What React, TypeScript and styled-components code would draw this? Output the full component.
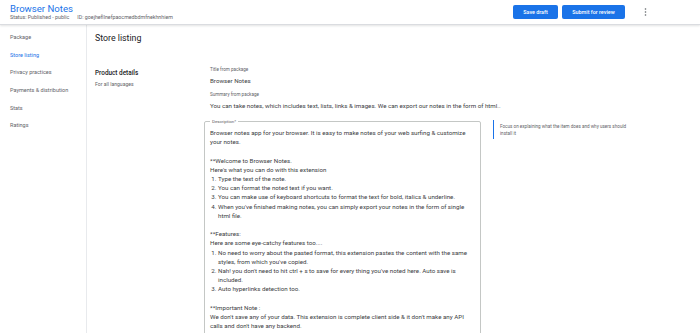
import React from "react";
import styled, { createGlobalStyle } from "styled-components";

const Global = createGlobalStyle`
  html, body {
    margin: 0;
    padding: 0;
    overflow: hidden;
    background: #fff;
    font-family: Roboto, "Liberation Sans", Arial, sans-serif;
    color: #202124;
  }
`;

const Page = styled.div`
  height: 100vh;
  display: flex;
  flex-direction: column;
`;

const Header = styled.header`
  height: 25px;
  flex-shrink: 0;
  display: flex;
  align-items: center;
  justify-content: space-between;
  padding: 0 10px;
  border-bottom: 1px solid #dadce0;
  box-shadow: 0 1px 2px rgba(60, 64, 67, 0.15);
  box-sizing: border-box;
  position: relative;
  z-index: 1;
`;

const TitleBlock = styled.div`
  display: flex;
  flex-direction: column;
`;

const AppTitle = styled.div`
  font-size: 9.6px;
  line-height: 11px;
  color: #1a73e8;
`;

const Meta = styled.div`
  display: flex;
  gap: 8px;
  font-size: 5.3px;
  line-height: 7px;
  color: #5f6368;
`;

const Actions = styled.div`
  display: flex;
  align-items: center;
  gap: 4px;
`;

const Button = styled.button<{ $w: number }>`
  height: 14px;
  width: ${(p) => p.$w}px;
  padding: 0;
  border: none;
  border-radius: 2px;
  background: #1a73e8;
  color: #fff;
  font-family: Roboto, "Liberation Sans", Arial, sans-serif;
  font-size: 5.4px;
  font-weight: 500;
  cursor: pointer;
`;

const More = styled.div`
  width: 6px;
  display: flex;
  justify-content: center;
  margin-left: 13px;
  margin-right: 42px;
`;

const Body = styled.div`
  flex: 1;
  display: flex;
  min-height: 0;
`;

const Sidebar = styled.nav`
  width: 87px;
  flex-shrink: 0;
  border-right: 1px solid #e8eaed;
  padding-top: 3px;
  box-sizing: border-box;
`;

const NavItem = styled.div<{ $active?: boolean }>`
  height: 17.7px;
  display: flex;
  align-items: center;
  padding-left: 10px;
  font-size: 5.5px;
  color: ${(p) => (p.$active ? "#1a73e8" : "#5f6368")};
`;

const Main = styled.main`
  flex: 1;
  padding-left: 8px;
`;

const Heading = styled.h1`
  margin: 7px 0 0;
  font-size: 8.8px;
  line-height: 12px;
  font-weight: 400;
  color: #202124;
`;

const Section = styled.div`
  display: grid;
  grid-template-columns: 97px 277px 1fr;
  grid-template-rows: auto auto;
  column-gap: 12px;
  margin-top: 23px;
`;

const SectionInfo = styled.div`
  grid-column: 1;
  grid-row: 1 / span 2;
  padding-top: 2px;
`;

const SectionTitle = styled.div`
  font-size: 6.4px;
  line-height: 9px;
  font-weight: 500;
  color: #202124;
`;

const SectionSub = styled.div`
  margin-top: 3px;
  font-size: 5.1px;
  line-height: 7px;
  color: #5f6368;
`;

const Fields = styled.div`
  grid-column: 2;
  grid-row: 1;
  display: flex;
  flex-direction: column;
  gap: 6px;
  padding-bottom: 8px;
`;

const StaticField = styled.div`
  padding-left: 6px;
`;

const FieldLabel = styled.div`
  font-size: 4.6px;
  line-height: 6px;
  color: #5f6368;
`;

const FieldValue = styled.div`
  margin-top: 3px;
  font-size: 6.2px;
  line-height: 10px;
  color: #3c4043;
  white-space: nowrap;
`;

const Box = styled.fieldset`
  grid-column: 2;
  grid-row: 2;
  margin: 0;
  padding: 5px 8px 12px 5px;
  border: 1px solid #c4c7c5;
  border-radius: 2px;
  min-width: 0;
`;

const Legend = styled.legend`
  margin-left: 0;
  padding: 0 2px;
  font-size: 4.4px;
  line-height: 5px;
  color: #5f6368;
`;

const Text = styled.div`
  font-size: 6.2px;
  line-height: 9.2px;
  color: #3c4043;
`;

const Line = styled.div`
  min-height: 9.2px;
`;

const List = styled.ol`
  margin: 0;
  padding-left: 8px;
`;

const Help = styled.div`
  grid-column: 3;
  grid-row: 2;
  align-self: start;
  width: 140px;
  height: 19px;
  margin-top: 1px;
  border-left: 1px solid #1a73e8;
  padding: 3px 0 0 6px;
  box-sizing: border-box;
  font-size: 4.6px;
  line-height: 7px;
  color: #5f6368;
`;

const navItems = [
  "Package",
  "Store listing",
  "Privacy practices",
  "Payments & distribution",
  "Stats",
  "Ratings",
];

const App: React.FC = () => {
  return (
    <Page>
      <Global />
      <Header>
        <TitleBlock>
          <AppTitle>Browser Notes</AppTitle>
          <Meta>
            <span>Status: Published - public</span>
            <span>ID: goejhefllnefpaocmedbdmfnekhnhiem</span>
          </Meta>
        </TitleBlock>
        <Actions>
          <Button $w={45}>Save draft</Button>
          <Button $w={63}>Submit for review</Button>
          <More>
            <svg width="3" height="8" viewBox="0 0 3 8">
              <circle cx="1.5" cy="1" r="0.8" fill="#5f6368" />
              <circle cx="1.5" cy="4" r="0.8" fill="#5f6368" />
              <circle cx="1.5" cy="7" r="0.8" fill="#5f6368" />
            </svg>
          </More>
        </Actions>
      </Header>
      <Body>
        <Sidebar>
          {navItems.map((item) => (
            <NavItem key={item} $active={item === "Store listing"}>
              {item}
            </NavItem>
          ))}
        </Sidebar>
        <Main>
          <Heading>Store listing</Heading>
          <Section>
            <SectionInfo>
              <SectionTitle>Product details</SectionTitle>
              <SectionSub>For all languages</SectionSub>
            </SectionInfo>
            <Fields>
              <StaticField>
                <FieldLabel>Title from package</FieldLabel>
                <FieldValue>Browser Notes</FieldValue>
              </StaticField>
              <StaticField>
                <FieldLabel>Summary from package</FieldLabel>
                <FieldValue>
                  You can take notes, which includes text, lists, links &amp; images. We can export our notes in the form of html..
                </FieldValue>
              </StaticField>
            </Fields>
            <Box>
              <Legend>Description*</Legend>
              <Text>
                <Line>
                  Browser notes app for your browser. It is easy to make notes of your web surfing &amp; customize
                  your notes.
                </Line>
                <Line />
                <Line>**Welcome to Browser Notes.</Line>
                <Line>Here's what you can do with this extension</Line>
                <List>
                  <li>Type the text of the note.</li>
                  <li>You can format the noted text if you want.</li>
                  <li>You can make use of keyboard shortcuts to format the text for bold, italics &amp; underline.</li>
                  <li>When you've finished making notes, you can simply export your notes in the form of single html file.</li>
                </List>
                <Line />
                <Line>**Features:</Line>
                <Line>Here are some eye-catchy features too....</Line>
                <List>
                  <li>No need to worry about the pasted format, this extension pastes the content with the same styles, from which you've copied.</li>
                  <li>Nah! you don't need to hit ctrl + s to save for every thing you've noted here. Auto save is included.</li>
                  <li>Auto hyperlinks detection too.</li>
                </List>
                <Line />
                <Line>**Important Note :</Line>
                <Line>
                  We don't save any of your data. This extension is complete client side &amp; it don't make any API
                  calls and don't have any backend.
                </Line>
              </Text>
            </Box>
            <Help>Focus on explaining what the item does and why users should install it</Help>
          </Section>
        </Main>
      </Body>
    </Page>
  );
};

export default App;
